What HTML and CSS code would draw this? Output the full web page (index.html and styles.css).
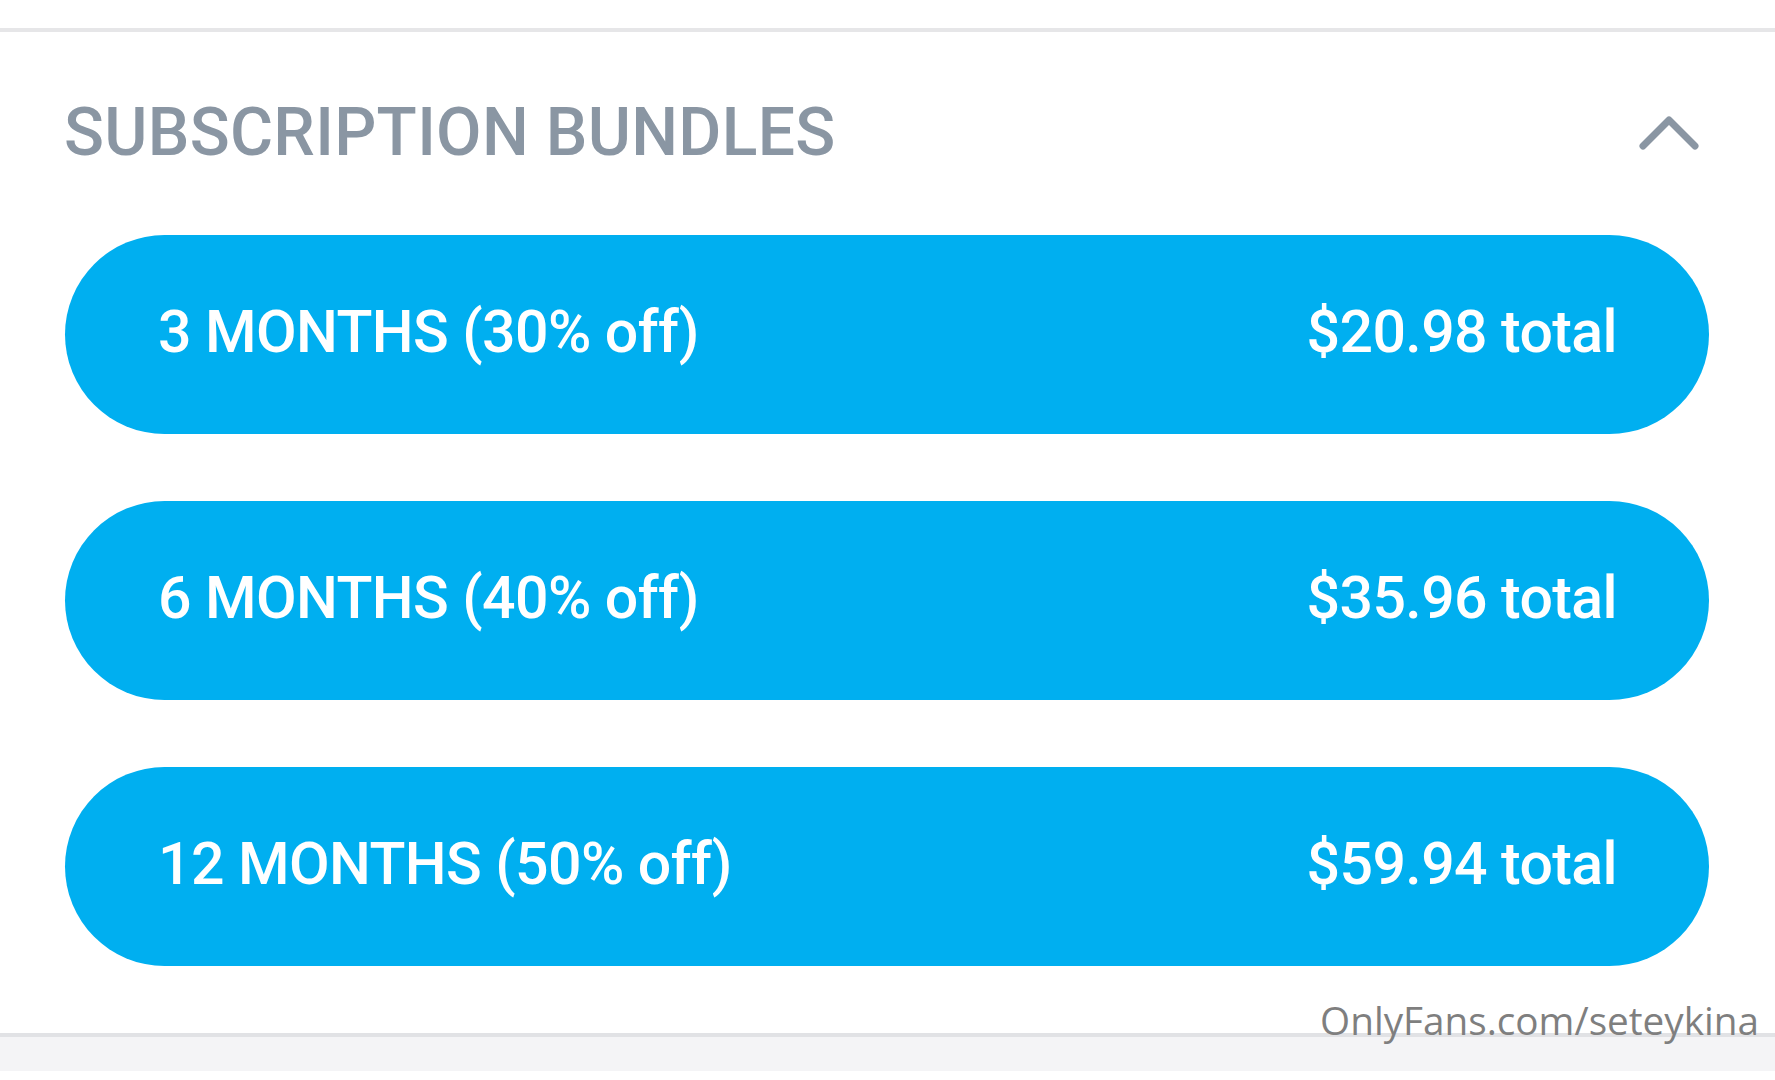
FILE: index.html
```html
<!DOCTYPE html>
<html lang="en">
<head>
<meta charset="utf-8">
<title>Subscription bundles</title>
<link rel="stylesheet" href="styles.css">
</head>
<body>
<div class="page">
  <section class="bundles">
    <header class="bundles-head">
      <h2 class="bundles-title">SUBSCRIPTION BUNDLES</h2>
      <svg class="chevron" width="70" height="44" viewBox="0 0 70 44" aria-hidden="true">
        <path d="M9 36 L35 10 L61 36" fill="none" stroke="#8a96a3" stroke-width="7" stroke-linecap="round" stroke-linejoin="round"/>
      </svg>
    </header>
    <div class="bundle-list">
      <button class="bundle"><span class="bundle-name">3 MONTHS (30% off)</span><span class="bundle-price">$20.98 total</span></button>
      <button class="bundle"><span class="bundle-name">6 MONTHS (40% off)</span><span class="bundle-price">$35.96 total</span></button>
      <button class="bundle"><span class="bundle-name">12 MONTHS (50% off)</span><span class="bundle-price">$59.94 total</span></button>
    </div>
  </section>
  <div class="below"></div>
  <div class="watermark">OnlyFans.com/seteykina</div>
</div>
</body>
</html>
```
FILE: styles.css
```css
html, body {
  margin: 0;
  padding: 0;
  background: #ffffff;
}

.page {
  position: relative;
  width: 1775px;
  height: 1080px;
  padding-top: 28px;
  box-sizing: border-box;
  overflow: hidden;
  font-family: Roboto, "Liberation Sans", sans-serif;
}

.bundles {
  border-top: 4px solid #e6e6e8;
  border-bottom: 4px solid #e1e2e5;
  padding-bottom: 67px;
}

.bundles-head {
  height: 200px;
  display: flex;
  align-items: center;
  justify-content: space-between;
  padding: 2px 71px 0 64px;
  box-sizing: border-box;
}

.bundles-title {
  margin: 0;
  font-size: 66px;
  line-height: 1;
  font-weight: 500;
  color: #8a96a3;
  letter-spacing: 0.3px;
}

.chevron {
  display: block;
  margin-top: -2px;
}

.bundle-list {
  display: flex;
  flex-direction: column;
  gap: 67px;
  padding: 3px 66px 0 65px;
}

.bundle {
  display: flex;
  align-items: center;
  justify-content: space-between;
  height: 199px;
  border: none;
  border-radius: 100px;
  background: #00aff0;
  color: #ffffff;
  padding: 0 92px 6px 93px;
  margin: 0;
  font-family: Roboto, "Liberation Sans", sans-serif;
  font-size: 59px;
  font-weight: 500;
  line-height: 1;
  letter-spacing: -0.6px;
  box-sizing: border-box;
  width: 100%;
}

.bundle-name,
.bundle-price {
  display: block;
  white-space: nowrap;
}

.below {
  height: 34px;
  background: #f4f4f6;
}

.watermark {
  position: absolute;
  right: 16px;
  top: 1001px;
  font-family: "Open Sans", "Liberation Sans", sans-serif;
  font-size: 38.7px;
  line-height: 1;
  color: #7f7f7f;
  white-space: nowrap;
}
```
